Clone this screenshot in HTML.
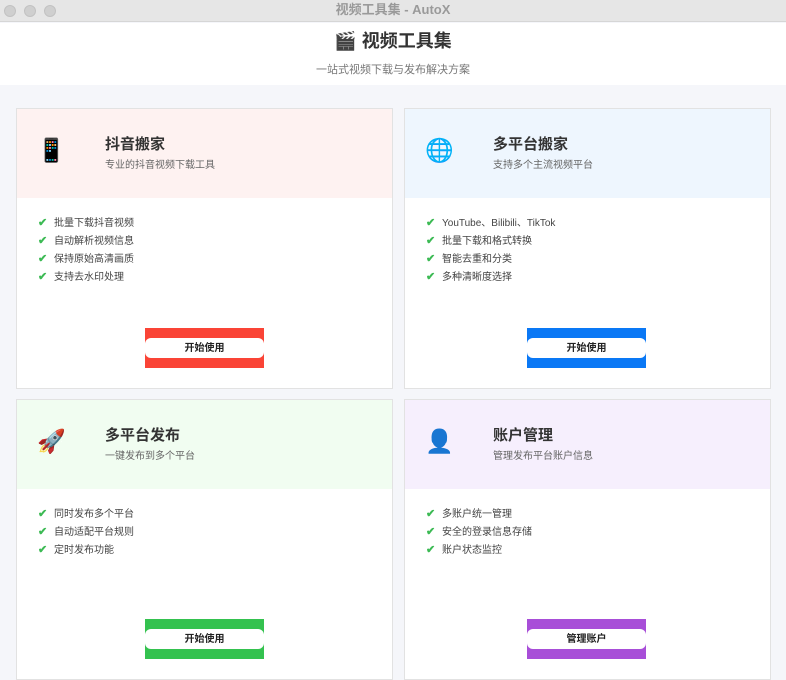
<!DOCTYPE html>
<html><head><meta charset="utf-8"><style>
*{margin:0;padding:0;box-sizing:border-box}
body{width:786px;height:657px;overflow:hidden;background:#f5f6fa;font-family:"Liberation Sans","Noto Sans CJK SC",sans-serif;color:#333;position:relative}
.tb{position:absolute;left:0;top:0;width:786px;height:22px;background:#e6e6e6;border-bottom:1px solid #d6d6d6;text-align:center;font-size:13px;line-height:20px;color:#9a9a9a;font-weight:bold}
.dot{position:absolute;top:5px;width:12px;height:12px;border-radius:50%;background:#cfcfcf;border:1px solid #c2c2c2}
.hd{position:absolute;left:0;top:23px;width:786px;height:62px;background:#fff;text-align:center}
.hd h1{font-size:18px;font-weight:bold;color:#333;margin-top:6px;line-height:24px}
.hd p{font-size:11px;color:#777;margin-top:8px}
.card{position:absolute;width:377px;height:281px;background:#fff;border:1px solid #e2e2e2}
.ch{height:89px;position:relative}
.ic{position:absolute;left:20px;top:26px;font-size:23px;line-height:30px}
.t{position:absolute;left:88px;top:24px;font-size:15px;font-weight:bold;color:#333}
.s{position:absolute;left:88px;top:47px;font-size:10px;color:#666}
ul{list-style:none;position:absolute;left:21px;top:106px;font-size:10px;color:#444}
li{height:18px;line-height:16px}
li b{color:#3cba54;font-weight:bold;display:inline-block;width:16px;font-size:11px}
.btn{position:absolute;top:219px;width:119px;height:40px}
.btn div{position:absolute;left:0;top:10px;width:119px;height:20px;background:#fff;border-radius:6px;text-align:center;font-size:10px;font-weight:bold;line-height:21px;color:#222}
</style></head><body>
<div class="tb"><span class="dot" style="left:4px"></span><span class="dot" style="left:24px"></span><span class="dot" style="left:44px"></span>视频工具集 - AutoX</div>
<div class="hd"><h1>🎬 视频工具集</h1><p>一站式视频下载与发布解决方案</p></div>

<div class="card" style="left:16px;top:108px">
<div class="ch" style="background:#fef2f1"><div class="ic">📱</div><div class="t">抖音搬家</div><div class="s">专业的抖音视频下载工具</div></div>
<ul><li><b>✔</b>批量下载抖音视频</li><li><b>✔</b>自动解析视频信息</li><li><b>✔</b>保持原始高清画质</li><li><b>✔</b>支持去水印处理</li></ul>
<div class="btn" style="left:128px;background:#fa4436"><div>开始使用</div></div>
</div>

<div class="card" style="left:404px;top:108px;width:367px">
<div class="ch" style="background:#eef6fe"><div class="ic">🌐</div><div class="t">多平台搬家</div><div class="s">支持多个主流视频平台</div></div>
<ul><li><b>✔</b>YouTube、Bilibili、TikTok</li><li><b>✔</b>批量下载和格式转换</li><li><b>✔</b>智能去重和分类</li><li><b>✔</b>多种清晰度选择</li></ul>
<div class="btn" style="left:122px;background:#0a78f5"><div>开始使用</div></div>
</div>

<div class="card" style="left:16px;top:399px">
<div class="ch" style="background:#f1fdf1"><div class="ic">🚀</div><div class="t">多平台发布</div><div class="s">一键发布到多个平台</div></div>
<ul><li><b>✔</b>同时发布多个平台</li><li><b>✔</b>自动适配平台规则</li><li><b>✔</b>定时发布功能</li></ul>
<div class="btn" style="left:128px;background:#34c24f"><div>开始使用</div></div>
</div>

<div class="card" style="left:404px;top:399px;width:367px">
<div class="ch" style="background:#f6effd"><div class="ic">👤</div><div class="t">账户管理</div><div class="s">管理发布平台账户信息</div></div>
<ul><li><b>✔</b>多账户统一管理</li><li><b>✔</b>安全的登录信息存储</li><li><b>✔</b>账户状态监控</li></ul>
<div class="btn" style="left:122px;background:#a84ed8"><div>管理账户</div></div>
</div>
</body></html>
